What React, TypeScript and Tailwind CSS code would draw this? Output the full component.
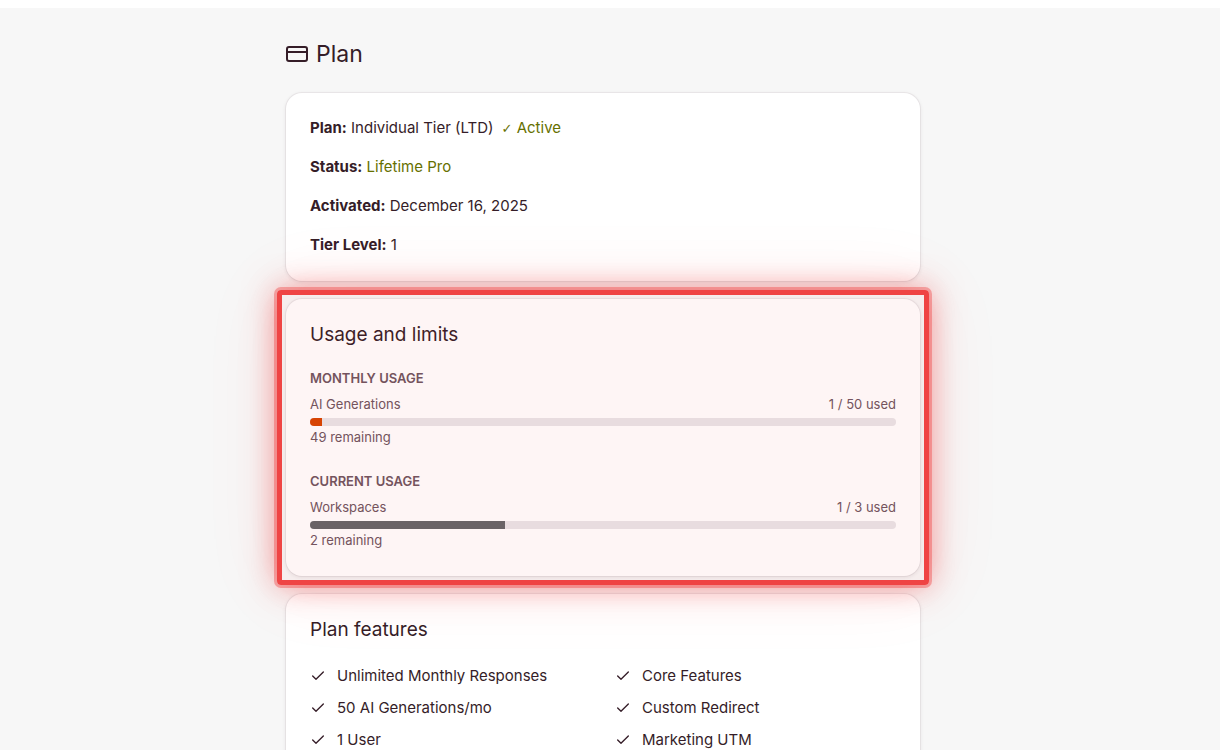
import { Check } from 'lucide-react';

type Meter = {
  heading: string;
  label: string;
  used: number;
  limit: number;
  percent: number;
  barClass: string;
};

const meters: Meter[] = [
  { heading: 'MONTHLY USAGE', label: 'AI Generations', used: 1, limit: 50, percent: 2, barClass: 'bg-[#d64500]' },
  { heading: 'CURRENT USAGE', label: 'Workspaces', used: 1, limit: 3, percent: 33.3, barClass: 'bg-[#646669]' },
];

const features = [
  'Unlimited Monthly Responses',
  'Core Features',
  '50 AI Generations/mo',
  'Custom Redirect',
  '1 User',
  'Marketing UTM',
];

const cardClass =
  'relative rounded-2xl bg-white px-6 shadow-[0_0_0_1px_rgba(53,29,40,0.05),0_1px_4px_rgba(53,29,40,0.1)]';

function CardIcon() {
  return (
    <svg width="22" height="16" viewBox="0 0 22 16" fill="none" stroke="currentColor" strokeWidth="2" aria-hidden="true">
      <rect x="1" y="1" width="20" height="14" rx="2" />
      <path d="M1 6h20" />
    </svg>
  );
}

function UsageMeter({ meter }: { meter: Meter }) {
  return (
    <section>
      <h3 className="mb-1.5 text-[13px] leading-5 font-semibold">{meter.heading}</h3>
      <div className="flex justify-between text-[13px] leading-5">
        <span>{meter.label}</span>
        <span>{meter.used} / {meter.limit} used</span>
      </div>
      <div
        role="progressbar"
        aria-label={meter.label}
        aria-valuenow={meter.used}
        aria-valuemax={meter.limit}
        className="mt-1 mb-px h-2 overflow-hidden rounded-full bg-[#e8e5e8]"
      >
        <div className={`h-full ${meter.barClass}`} style={{ width: `${meter.percent}%` }} />
      </div>
      <p className="text-[13px] leading-5">{meter.limit - meter.used} remaining</p>
    </section>
  );
}

export default function App() {
  return (
    <div className="h-screen overflow-hidden bg-white pt-2 font-['Inter','Liberation_Sans',sans-serif] text-[#351d28]">
      <main className="min-h-full bg-[#f7f7f7] pt-[30px] pr-3.5">
        <div className="mx-auto max-w-[634px]">
          <h1 className="mb-[23px] flex items-center gap-2 text-[23px] leading-8">
            <CardIcon />
            Plan
          </h1>

          <div className="flex flex-col gap-[18px]">
            <div className={`${cardClass} flex flex-col gap-4 pt-[23px] pb-[25px] text-[15px] leading-[23px]`}>
              <p>
                <strong className="font-bold">Plan:</strong> Individual Tier (LTD)
                <span className="ml-2 text-[#667000]">
                  <span className="font-['DejaVu_Sans'] text-[13px] leading-none">✓</span> Active
                </span>
              </p>
              <p>
                <strong className="font-bold">Status:</strong> <span className="text-[#667000]">Lifetime Pro</span>
              </p>
              <p>
                <strong className="font-bold">Activated:</strong> December 16, 2025
              </p>
              <p>
                <strong className="font-bold">Tier Level:</strong> 1
              </p>
            </div>

            <div className={`${cardClass} pt-6 pb-[26px]`}>
              <h2 className="mb-[21px] text-[19px] leading-6">Usage and limits</h2>
              <div className="flex flex-col gap-6 text-[#6e5560]">
                {meters.map(meter => (
                  <UsageMeter key={meter.label} meter={meter} />
                ))}
              </div>
              {/* Highlight frame */}
              <div className="pointer-events-none absolute -inset-[9px] z-10 rounded border-[5px] border-[#ef4444] bg-[#ef4444]/5 shadow-[0_0_0_3px_rgba(239,68,68,0.4),0_0_32px_rgba(239,68,68,0.6),0_0_80px_rgba(239,68,68,0.08)]" />
            </div>

            <div className={`${cardClass} pt-6 pb-10`}>
              <h2 className="mb-[22px] text-[19px] leading-6">Plan features</h2>
              <ul className="grid grid-cols-2 gap-x-6 gap-y-2 text-[15px] leading-6">
                {features.map(feature => (
                  <li key={feature} className="flex items-center gap-[11px]">
                    <Check className="h-4 w-4" strokeWidth={2} />
                    {feature}
                  </li>
                ))}
              </ul>
            </div>
          </div>
        </div>
      </main>
    </div>
  );
}
